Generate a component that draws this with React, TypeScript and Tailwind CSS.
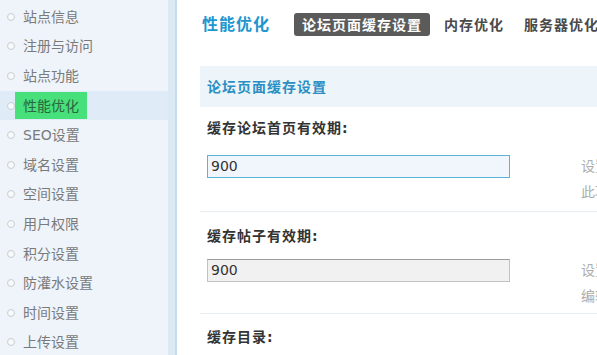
import React from "react";

const items = [
  "站点信息",
  "注册与访问",
  "站点功能",
  "性能优化",
  "SEO设置",
  "域名设置",
  "空间设置",
  "用户权限",
  "积分设置",
  "防灌水设置",
  "时间设置",
  "上传设置",
];

const font = { fontFamily: '"DejaVu Sans", "Noto Sans CJK SC", sans-serif' };

export default function App() {
  return (
    <div
      className="w-[597px] h-[355px] overflow-hidden flex bg-white"
      style={font}
    >
      {/* Sidebar */}
      <div className="w-[168px] shrink-0 bg-[#eef4fa] pt-[2px]">
        {items.map((t) => {
          const active = t === "性能优化";
          return (
            <div
              key={t}
              className={
                "h-[29.6px] flex items-center pl-[7px] " +
                (active ? "bg-[#dfebf6]" : "")
              }
            >
              <span className="w-[8px] h-[8px] rounded-full border border-[#c9ced2] bg-[#f7f9fb] shrink-0" />
              {active ? (
                <span className="h-[27px] flex items-center px-[8px] bg-[#48e07a] text-[#2a6640] text-[14px] leading-none whitespace-nowrap">
                  {t}
                </span>
              ) : (
                <span className="ml-[8px] text-[14px] text-[#7a7a7a] leading-none whitespace-nowrap">
                  {t}
                </span>
              )}
            </div>
          );
        })}
      </div>
      {/* divider strip */}
      <div className="w-[9px] shrink-0 bg-[#dbe9f5] border-r-2 border-[#c9dced]" />

      {/* Main */}
      <div className="flex-1 min-w-0">
        <div className="h-[50px] flex items-center pl-[25px] pb-[1px] whitespace-nowrap">
          <span className="shrink-0 text-[16px] font-bold text-[#2196d0] tracking-[1px] leading-none">
            性能优化
          </span>
          <span className="shrink-0 ml-[24px] h-[23px] flex items-center px-[8px] rounded-[3px] bg-[#5b5b5b] text-white text-[14px] font-bold tracking-[1px] leading-none">
            论坛页面缓存设置
          </span>
          <span className="shrink-0 ml-[14px] text-[14px] font-bold text-[#4a4a4a] tracking-[1px] leading-none">
            内存优化
          </span>
          <span className="shrink-0 ml-[20px] text-[14px] font-bold text-[#4a4a4a] tracking-[1px] leading-none">
            服务器优化
          </span>
        </div>

        <div className="ml-[23px] mt-[16px]">
          <div className="h-[41px] flex items-center pl-[7px] bg-[#eef5fa]">
            <span className="text-[14px] font-bold text-[#2a8fc4] tracking-[1px] leading-none">
              论坛页面缓存设置
            </span>
          </div>

          {/* Block 1 */}
          <div className="border-b border-[#e9eef2] pt-[11px] pb-[6px] pl-[7px]">
            <div className="h-[20px] flex items-center text-[14px] font-bold text-[#333] tracking-[1px]">
              缓存论坛首页有效期:
            </div>
            <div className="mt-[17px] flex items-start">
              <div className="w-[303px] h-[23px] shrink-0 border border-[#5ab4d8] bg-[#f0f6fb] flex items-center px-[3px] text-[14px] text-[#333]">
                900
              </div>
              <div className="ml-[71px] -mt-[2px] text-[14px] leading-[26px] text-[#adadad] whitespace-nowrap">
                <div>设置缓存论坛首页的有效时间</div>
                <div>此项设置为 0 则不缓存</div>
              </div>
            </div>
          </div>

          {/* Block 2 */}
          <div className="border-b border-[#e9eef2] pt-[14px] pb-[4px] pl-[7px]">
            <div className="h-[20px] flex items-center text-[14px] font-bold text-[#333] tracking-[1px]">
              缓存帖子有效期:
            </div>
            <div className="mt-[13px] flex items-start">
              <div className="w-[303px] h-[23px] shrink-0 border border-[#c2c2c2] border-t-[#9a9a9a] bg-[#f1f1f1] flex items-center px-[3px] text-[14px] text-[#333]">
                900
              </div>
              <div className="ml-[71px] -mt-[2px] text-[14px] leading-[26px] text-[#adadad] whitespace-nowrap">
                <div>设置缓存帖子的有效时间</div>
                <div>编辑帖子后缓存将被更新</div>
              </div>
            </div>
          </div>

          {/* Block 3 */}
          <div className="pt-[13px] pl-[7px]">
            <div className="h-[20px] flex items-center text-[14px] font-bold text-[#333] tracking-[1px]">
              缓存目录:
            </div>
          </div>
        </div>
      </div>
    </div>
  );
}
